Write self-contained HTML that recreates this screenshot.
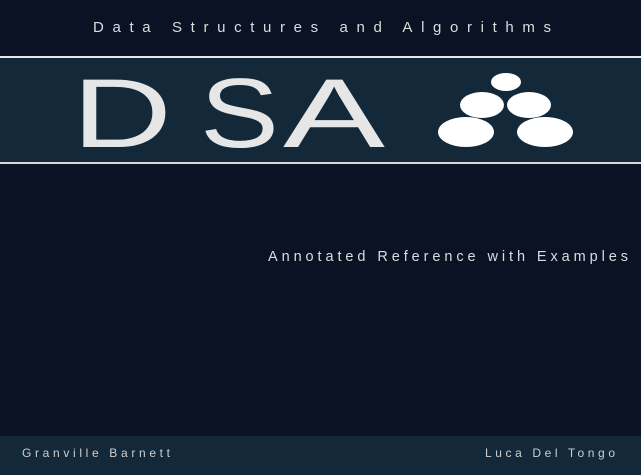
<!DOCTYPE html>
<html><head><style>
html,body{margin:0;padding:0}
body{width:641px;height:475px;background:#0b1224;position:relative;overflow:hidden;font-family:"Liberation Sans",sans-serif}
</style></head><body>
<svg width="641" height="475" style="position:absolute;left:0;top:0">
<rect x="0" y="56" width="641" height="2" fill="#e8e8e8"/>
<rect x="0" y="58" width="641" height="104" fill="#13293a"/>
<rect x="0" y="162" width="641" height="2" fill="#d8d8d8"/>
<rect x="0" y="436" width="641" height="39" fill="#132838"/>
<g fill="#e6e6e6" font-family="Liberation Sans" font-size="98">
<text x="72" y="147" textLength="100" lengthAdjust="spacingAndGlyphs">D</text>
<text x="200" y="147" textLength="79" lengthAdjust="spacingAndGlyphs">S</text>
<text x="283" y="147" textLength="102" lengthAdjust="spacingAndGlyphs">A</text>
<text x="93" y="32" font-size="15" textLength="458" fill="#dcdcdc" lengthAdjust="spacing">Data Structures and Algorithms</text>
<text x="268" y="261" font-size="14.5" textLength="360" fill="#dcdcdc" lengthAdjust="spacing">Annotated Reference with Examples</text>
<text x="22" y="457" font-size="12" textLength="148" fill="#cfcfcf" lengthAdjust="spacing">Granville Barnett</text>
<text x="485" y="457" font-size="12" textLength="130" fill="#cfcfcf" lengthAdjust="spacing">Luca Del Tongo</text>
</g>
<g fill="#fff">
<ellipse cx="506" cy="82" rx="15" ry="9"/>
<ellipse cx="482" cy="105" rx="22" ry="13"/>
<ellipse cx="529" cy="105" rx="22" ry="13"/>
<ellipse cx="466" cy="132" rx="28" ry="15"/>
<ellipse cx="545" cy="132" rx="28" ry="15"/>
</g>
</svg>
</body></html>
